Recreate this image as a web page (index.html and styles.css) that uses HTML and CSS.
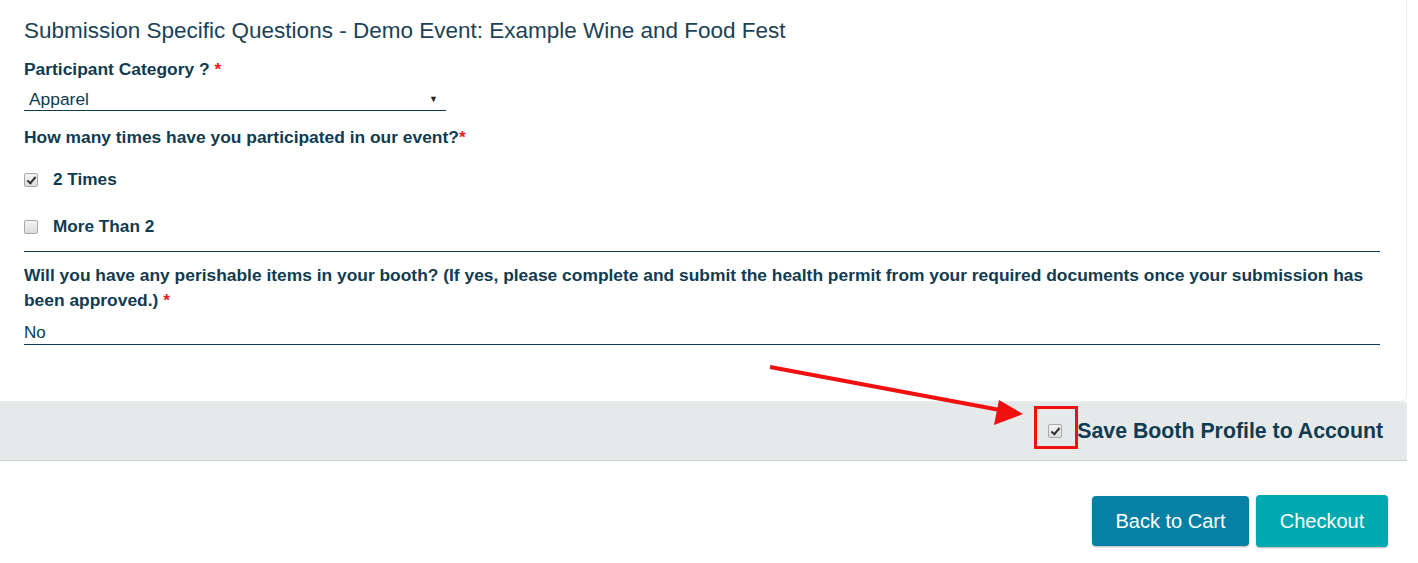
FILE: index.html
```html
<!DOCTYPE html>
<html>
<head>
<meta charset="utf-8">
<link rel="stylesheet" href="styles.css">
</head>
<body>
<div class="card">
  <h3 class="title">Submission Specific Questions - Demo Event: Example Wine and Food Fest</h3>
  <div class="label">Participant Category ? <span class="req">*</span></div>
  <div class="select"><span>Apparel</span><span class="caret">&#9660;</span></div>
  <div class="label q2">How many times have you participated in our event?<span class="req">*</span></div>
  <div class="opts">
    <div class="opt"><span class="cb checked"></span><span>2 Times</span></div>
    <div class="opt"><span class="cb"></span><span>More Than 2</span></div>
  </div>
  <div class="rule"></div>
  <div class="label long">Will you have any perishable items in your booth? (If yes, please complete and submit the health permit from your required documents once your submission has been approved.) <span class="req">*</span></div>
  <div class="field">No</div>
</div>
<div class="band">
  <span class="cb checked"></span>
  <span class="save">Save Booth Profile to Account</span>
</div>
<div class="actions">
  <button class="btn back">Back to Cart</button>
  <button class="btn checkout">Checkout</button>
</div>
<svg class="annot" width="1418" height="563" viewBox="0 0 1418 563">
  <line x1="770" y1="367" x2="1000" y2="410" stroke="#f01010" stroke-width="4"/>
  <polygon points="1023,414 999,400 994,425" fill="#f01010"/>
  <rect x="1035.5" y="407.5" width="41" height="40" fill="none" stroke="#f01010" stroke-width="3"/>
</svg>
</body>
</html>
```
FILE: styles.css
```css
html, body {
  margin: 0;
  padding: 0;
  background: #fff;
}
body {
  font-family: "Liberation Sans", Arial, sans-serif;
  color: #103b50;
  width: 1418px;
  height: 563px;
  overflow: hidden;
  position: relative;
}
.card {
  width: 1356px;
  padding: 16px 26px 0 24px;
  border-right: 1px solid #ececec;
  border-bottom: 1px solid #ececec;
  border-bottom-right-radius: 6px;
  height: 385px;
}
.title {
  margin: 0;
  font-size: 22.5px;
  font-weight: normal;
  line-height: 30px;
  color: #1c4256;
}
.label {
  margin-top: 13px;
  font-size: 17.4px;
  font-weight: bold;
  line-height: 20px;
}
.req { color: #ee1c1c; }
.select {
  margin-top: 10px;
  width: 409px;
  padding: 0 8px 0 5px;
  height: 21px;
  line-height: 21px;
  border-bottom: 1px solid #103b50;
  display: flex;
  justify-content: space-between;
  font-size: 17.4px;
}
.caret {
  font-size: 9px;
  color: #222;
}
.label.q2 { margin-top: 16px; }
.opts {
  margin-top: 9px;
  display: flex;
  flex-direction: column;
}
.opt {
  display: flex;
  align-items: center;
  gap: 15px;
  font-size: 17.2px;
  font-weight: bold;
  height: 47px;
}
.cb {
  display: inline-block;
  width: 12px;
  height: 12px;
  border: 1px solid #a9a9a9;
  border-radius: 2px;
  background: linear-gradient(#f4f4f4, #dcdcdc);
  position: relative;
  flex: none;
}
.cb.checked::after {
  content: "";
  position: absolute;
  left: 4px;
  top: 1px;
  width: 3px;
  height: 7px;
  border-right: 2px solid #333;
  border-bottom: 2px solid #333;
  transform: rotate(40deg);
}
.rule {
  margin-top: 1px;
  height: 1px;
  background: #103b50;
}
.label.long {
  margin-top: 11px;
  line-height: 25px;
}
.field {
  margin-top: 10px;
  font-size: 17px;
  line-height: 20px;
  padding-bottom: 1px;
  border-bottom: 1px solid #103b50;
}
.band {
  height: 59px;
  background: #e5e9ea;
  border-bottom: 1px solid #cfd3d4;
  width: 1407px;
  display: flex;
  align-items: center;
  justify-content: flex-end;
  box-sizing: border-box;
  padding-right: 24px;
  gap: 15px;
}
.save {
  font-size: 21.3px;
  font-weight: bold;
  color: #103b50;
}
.actions {
  display: flex;
  justify-content: flex-end;
  gap: 7px;
  padding: 35px 30px 0 0;
}
.btn {
  font-family: "Liberation Sans", Arial, sans-serif;
  font-size: 20px;
  color: #fff;
  border: none;
  border-radius: 4px;
  height: 50px;
  box-shadow: 0 1px 2px rgba(0,0,0,0.3);
}
.back {
  background: #0681a5;
  width: 157px;
}
.checkout {
  background: #00a8b0;
  width: 132px;
  height: 52px;
  margin-top: -1px;
}
.annot {
  position: absolute;
  left: 0;
  top: 0;
  pointer-events: none;
}
```
